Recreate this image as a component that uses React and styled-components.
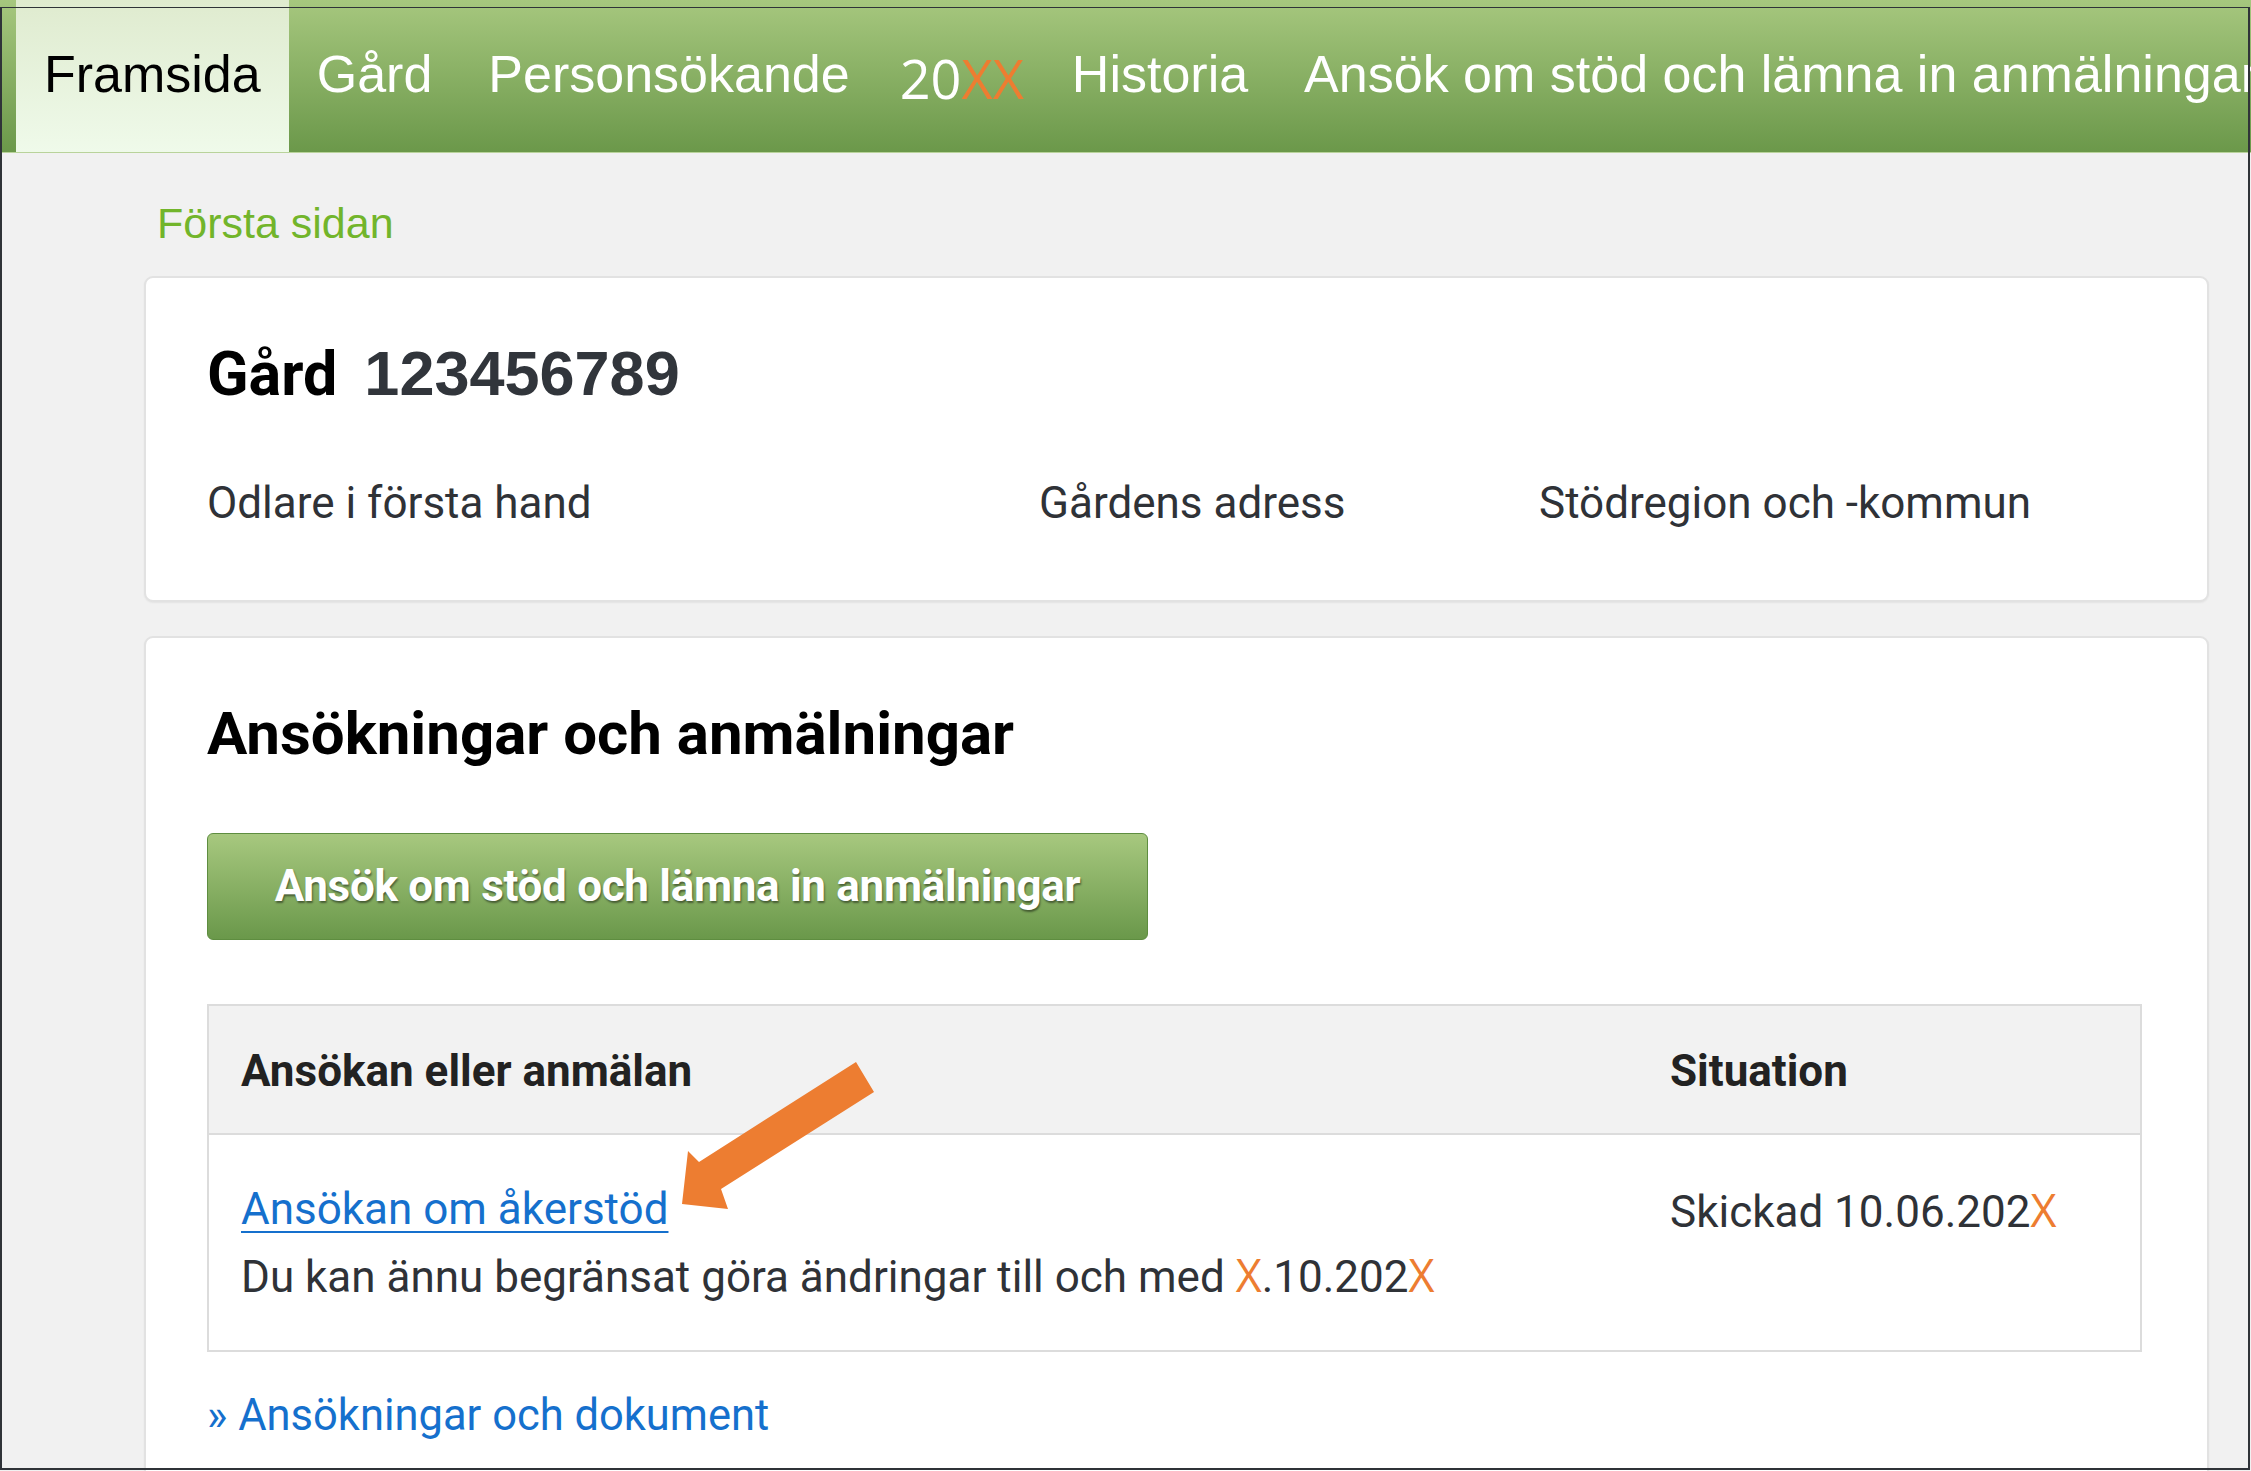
import styled, { createGlobalStyle } from "styled-components";

const Global = createGlobalStyle`
    html, body {
        margin: 0;
        padding: 0;
        background: #f1f1f1;
    }
    * { box-sizing: border-box; }
`

let Frame = styled.div`
    position: relative;
    width: 100vw;
    height: 1471px;
    overflow: hidden;
    background: #f1f1f1;
    font-family: Roboto, "Liberation Sans", Arial, sans-serif;
    // the thin screenshot border drawn over everything
    &::before {
        content: "";
        position: absolute;
        inset: 7px 1px 1px 0;
        border: 2px solid #2f3338;
        border-top-width: 1px;
        pointer-events: none;
        z-index: 5;
    }
`
let Nav = styled.nav`
    display: flex;
    height: 153px;
    padding-left: 16px;
    overflow: hidden;
    white-space: nowrap;
    background: linear-gradient(#a6c77e, #6b984a);
    border-bottom: 1px solid #b9d39b;
`
let NavItem = styled.div`
    padding: ${p => 44 + (p.$drop || 0)}px ${p => p.$right || 28}px 0 ${p => p.$left || 28}px;
    font-family: "Liberation Sans", Arial, sans-serif;
    font-size: 52px;
    line-height: 60px;
    color: ${p => (p.$active ? "#000" : "#fff")};
    background: ${p => (p.$active ? "linear-gradient(#dfebcf, #effaea)" : "transparent")};
    flex-shrink: 0;
`
let Calibri = styled.span`
    font-family: "Open Sans", "Liberation Sans", sans-serif;
    font-size: ${p => p.$size || 56}px;
    font-weight: 400;
    color: ${p => p.$color || "inherit"};
`
let Main = styled.div`
    padding: 0 42px 0 144px;
`
let Crumb = styled.div`
    padding: 45px 0 0 13px;
    height: 123px;
    font-family: "Liberation Sans", Arial, sans-serif;
    font-size: 43px;
    line-height: 50px;
    color: #72b52b;
`
let Card = styled.section`
    background: #fff;
    border: 2px solid #e2e2e2;
    border-radius: 9px;
    box-shadow: 0 1px 2px rgba(0, 0, 0, 0.06);
    padding: ${p => p.$pad};
    margin-bottom: 34px;
`
let FarmTitle = styled.h1`
    margin: 0;
    font-family: Roboto, sans-serif;
    font-weight: 700;
    font-size: 61px;
    line-height: 70px;
    color: #000;
    span {
        font-family: "Liberation Sans", Arial, sans-serif;
        font-size: 63px;
        color: #31353b;
        margin-left: 27px;
    }
`
let InfoRow = styled.div`
    display: grid;
    grid-template-columns: 832px 500px 1fr;
    margin-top: 64px;
    font-size: 44px;
    line-height: 60px;
    color: #2f3237;
`
let Heading = styled.h2`
    margin: 0;
    font-size: 60px;
    line-height: 72px;
    font-weight: 700;
    color: #000;
`
let GreenButton = styled.button`
    display: block;
    width: 941px;
    height: 107px;
    margin-top: 63px;
    padding: 0;
    border: 1px solid #5e8d40;
    border-radius: 6px;
    background: linear-gradient(#a7c87f, #6a984a);
    color: #fff;
    font-family: Roboto, sans-serif;
    font-weight: 700;
    font-size: 44px;
    line-height: 105px;
    letter-spacing: -0.3px;
    text-shadow: 1px 2px 2px rgba(0, 0, 0, 0.45);
    cursor: pointer;
`
let TableWrap = styled.div`
    position: relative;
    width: 1935px;
    margin-top: 64px;
`
let Table = styled.table`
    width: 100%;
    border-collapse: collapse;
    border: 2px solid #dcdcdc;
    font-size: 44px;
    color: #2f3237;
    th, td {
        text-align: left;
        vertical-align: top;
        padding: 0 32px;
    }
    th {
        background: #f2f2f2;
        font-weight: 700;
        color: #222;
        line-height: 60px;
        padding-top: 35px;
        padding-bottom: 32px;
        border-bottom: 2px solid #dcdcdc;
    }
    td {
        line-height: 65px;
        padding-top: 42px;
        padding-bottom: 40px;
    }
`
let Link = styled.a`
    color: #1570cd;
    text-decoration: underline;
    text-underline-offset: 7px;
    text-decoration-thickness: 2px;
`
let Arrow = styled.svg`
    position: absolute;
    left: 472px;
    top: 53px;
    width: 200px;
    height: 155px;
`
let MoreLink = styled.a`
    display: block;
    margin-top: 31px;
    font-size: 43.5px;
    line-height: 65px;
    color: #1570cd;
    text-decoration: none;
`

const navItems = ["Gård", "Personsökande"]

function App() {
    return (
        <>
            <Global />
            <Frame>
                <Nav>
                    <NavItem $active>Framsida</NavItem>
                    {navItems.map((a, i) => (
                        <NavItem key={i}>{a}</NavItem>
                    ))}
                    <NavItem $drop={4} $left={22} $right={20}>
                        <Calibri $size={54}>20</Calibri><Calibri $size={54} $color="#ed7d31">XX</Calibri>
                    </NavItem>
                    <NavItem>Historia</NavItem>
                    <NavItem>Ansök om stöd och lämna in anmälningar</NavItem>
                </Nav>
                <Main>
                    <Crumb>Första sidan</Crumb>
                    <Card $pad="60px 61px 67px">
                        <FarmTitle>Gård<span>123456789</span></FarmTitle>
                        <InfoRow>
                            <div>Odlare i första hand</div>
                            <div>Gårdens adress</div>
                            <div>Stödregion och -kommun</div>
                        </InfoRow>
                    </Card>
                    <Card $pad="60px 61px 120px">
                        <Heading>Ansökningar och anmälningar</Heading>
                        <GreenButton>Ansök om stöd och lämna in anmälningar</GreenButton>
                        <TableWrap>
                            <Table>
                                <thead>
                                    <tr>
                                        <th style={{ width: 1430 }}>Ansökan eller anmälan</th>
                                        <th>Situation</th>
                                    </tr>
                                </thead>
                                <tbody>
                                    <tr>
                                        <td>
                                            <Link href="#">Ansökan om åkerstöd</Link>
                                            <br />
                                            Du kan ännu begränsat göra ändringar till och med{" "}
                                            <Calibri $size={45} $color="#ed7d31">X</Calibri>.10.202<Calibri $size={45} $color="#ed7d31">X</Calibri>
                                        </td>
                                        <td>
                                            Skickad 10.06.202<Calibri $size={45} $color="#ed7d31">X</Calibri>
                                        </td>
                                    </tr>
                                </tbody>
                            </Table>
                            {/* orange annotation arrow */}
                            <Arrow viewBox="0 0 200 155">
                                <polygon
                                    fill="#ed7d31"
                                    points="177,5 195,35 42,132 49,152 3,147 9,94 20,105"
                                />
                            </Arrow>
                        </TableWrap>
                        <MoreLink href="#">» Ansökningar och dokument</MoreLink>
                    </Card>
                </Main>
            </Frame>
        </>
    )
}

export default App
